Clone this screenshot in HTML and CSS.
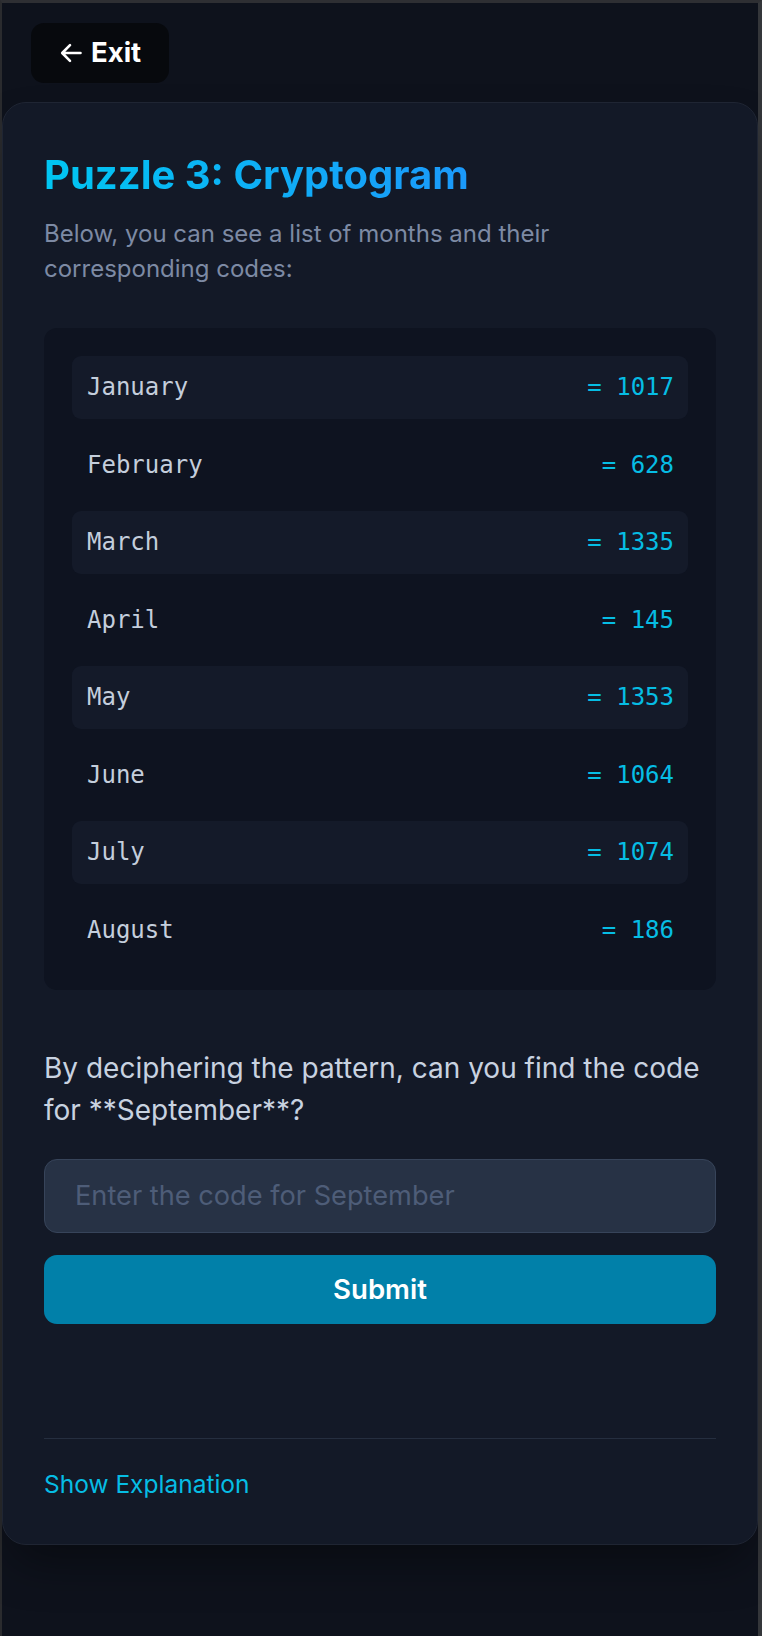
FILE: index.html
```html
<!DOCTYPE html>
<html lang="en">
<head>
<meta charset="utf-8">
<title>Puzzle 3: Cryptogram</title>
<link rel="stylesheet" href="styles.css">
</head>
<body>
<div class="frame">
  <header class="topbar">
    <button class="exit-btn" type="button">
      <svg class="exit-icon" width="22" height="22" viewBox="0 0 22 22" aria-hidden="true">
        <path d="M20.5 11H2.5M10 3.2L2.2 11l7.8 7.8" fill="none" stroke="#ffffff" stroke-width="2.6" stroke-linecap="round" stroke-linejoin="round"/>
      </svg>
      <span>Exit</span>
    </button>
  </header>

  <main class="card">
    <h1 class="title">Puzzle 3: Cryptogram</h1>
    <p class="subtitle">Below, you can see a list of months and their corresponding codes:</p>

    <div class="codes">
      <div class="row shaded"><span class="month">January</span><span class="code">= 1017</span></div>
      <div class="row"><span class="month">February</span><span class="code">= 628</span></div>
      <div class="row shaded"><span class="month">March</span><span class="code">= 1335</span></div>
      <div class="row"><span class="month">April</span><span class="code">= 145</span></div>
      <div class="row shaded"><span class="month">May</span><span class="code">= 1353</span></div>
      <div class="row"><span class="month">June</span><span class="code">= 1064</span></div>
      <div class="row shaded"><span class="month">July</span><span class="code">= 1074</span></div>
      <div class="row"><span class="month">August</span><span class="code">= 186</span></div>
    </div>

    <p class="question">By deciphering the pattern, can you find the code for **September**?</p>

    <input class="answer" type="text" placeholder="Enter the code for September">
    <button class="submit" type="button">Submit</button>

    <div class="divider"></div>
    <button class="explain" type="button">Show Explanation</button>
  </main>
</div>
</body>
</html>
```

FILE: styles.css
```css
html, body {
  margin: 0;
  padding: 0;
  background: #0e121c;
}

body {
  font-family: Inter, "Noto Sans", "Liberation Sans", sans-serif;
}

.frame {
  box-sizing: border-box;
  min-height: 100vh;
  border-style: solid;
  border-width: 3px 4px 0 2px;
  border-color: #2e2f33 #34363a #2e2f33 #2a2b2e;
  padding-top: 20px;
  background: #0e121c;
}

.topbar {
  padding-left: 29px;
}

.exit-btn {
  display: inline-flex;
  align-items: center;
  gap: 9px;
  height: 60px;
  box-sizing: border-box;
  padding: 0 28px 0 29px;
  background: #07090d;
  border: none;
  border-radius: 13px;
  color: #ffffff;
  font-family: Inter, "Noto Sans", sans-serif;
  font-weight: 700;
  font-size: 27.5px;
  line-height: 1;
  cursor: pointer;
}

.exit-icon {
  display: block;
  flex: none;
}

.card {
  display: block;
  margin-top: 19px;
  background: #131927;
  border: 1px solid #1f2533;
  border-radius: 24px;
  padding: 48px 41px 44px;
  box-shadow: 0 25px 50px -12px rgba(0, 0, 0, 0.45);
}

.title {
  margin: 0 0 17px;
  font-size: 40px;
  line-height: 48px;
  font-weight: 700;
  background: linear-gradient(to right, #00c6f2, #2b7fff);
  -webkit-background-clip: text;
  background-clip: text;
  color: transparent;
}

.subtitle {
  margin: 0 0 42px;
  font-size: 24px;
  line-height: 35px;
  color: #7d8aa4;
}

.codes {
  display: flex;
  flex-direction: column;
  gap: 14.5px;
  padding: 28px;
  background: #0e1320;
  border-radius: 13px;
}

.row {
  display: flex;
  justify-content: space-between;
  align-items: center;
  padding: 16px 14px 16px 15px;
  border-radius: 9px;
  font-family: "DejaVu Sans Mono", "Liberation Mono", monospace;
  font-size: 24px;
  line-height: 31px;
}

.row.shaded {
  background: #141a29;
}

.month {
  color: #c4cedc;
}

.code {
  color: #06bde4;
}

.question {
  margin: 57px 0 26.7px;
  font-size: 28px;
  line-height: 42.67px;
  color: #c8d2e0;
}

.answer {
  display: block;
  width: 100%;
  height: 74px;
  box-sizing: border-box;
  padding: 0 30px;
  background: #273245;
  border: 1px solid #37445a;
  border-radius: 13px;
  font-family: Inter, "Noto Sans", sans-serif;
  font-size: 27.2px;
  color: #c8d2e0;
  outline: none;
}

.answer::placeholder {
  color: #4e5d78;
}

.submit {
  display: block;
  width: 100%;
  height: 69px;
  margin-top: 22px;
  background: #0180a9;
  border: none;
  border-radius: 13px;
  color: #ffffff;
  font-family: Inter, "Noto Sans", sans-serif;
  font-weight: 600;
  font-size: 27.6px;
  cursor: pointer;
}

.divider {
  margin-top: 114px;
  border-top: 1px solid #252e3f;
}

.explain {
  display: block;
  margin-top: 29px;
  padding: 0;
  background: none;
  border: none;
  font-family: Inter, "Noto Sans", sans-serif;
  font-size: 24.5px;
  line-height: 32px;
  color: #06bde4;
  cursor: pointer;
}
```
